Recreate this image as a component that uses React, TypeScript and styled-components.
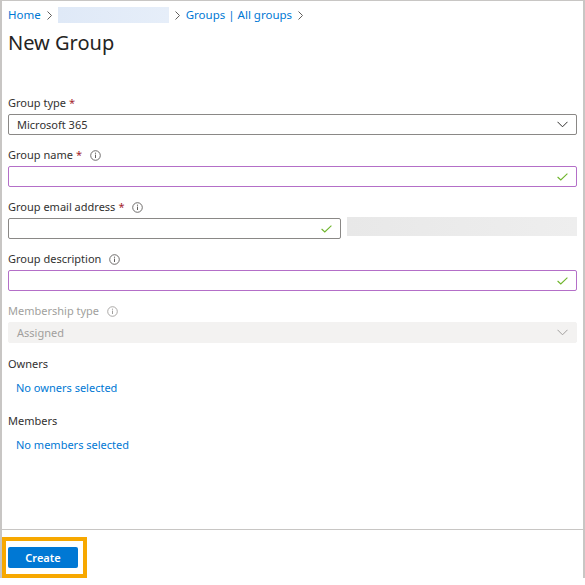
import React from 'react'
import styled, { createGlobalStyle } from 'styled-components'

const GlobalStyle = createGlobalStyle`
  html, body {
    margin: 0;
    padding: 0;
    background: #ffffff;
  }
  body {
    font-family: "Segoe UI", "Noto Sans", "Open Sans", Arial, sans-serif;
    color: #323130;
  }
  * {
    box-sizing: border-box;
  }
`

const Panel = styled.div`
  width: 585px;
  height: 578px;
  border-top: 1px solid #c8c6c4;
  border-left: 2px solid #c8c6c4;
  border-right: 2px solid #c8c6c4;
  display: flex;
  flex-direction: column;
`

const Body = styled.div`
  flex: 1;
  padding: 6px 6px 0 6px;
`

const Crumbs = styled.nav`
  display: flex;
  align-items: center;
  height: 16px;
  font-size: 11.5px;
  line-height: 16px;
`

const CrumbLink = styled.a`
  color: #0078d4;
  text-decoration: none;
`

const CrumbSep = styled.span`
  display: inline-flex;
  margin: 0 6px 0 6px;
`

const Redacted = styled.span`
  display: inline-block;
  width: 111px;
  height: 16px;
  background: linear-gradient(90deg, #dfe9f7, #e6eef9);
`

const Title = styled.h1`
  margin: 6px 0 0 0;
  font-size: 20px;
  line-height: 28px;
  font-weight: 400;
  color: #252423;
`

const Form = styled.div`
  margin-top: 38px;
  display: flex;
  flex-direction: column;
`

const Field = styled.div<{ $gap?: number }>`
  display: flex;
  flex-direction: column;
  margin-bottom: ${p => p.$gap ?? 12}px;
`

const Label = styled.div<{ $disabled?: boolean }>`
  display: flex;
  align-items: center;
  height: 16px;
  margin-bottom: 3px;
  font-size: 11px;
  line-height: 16px;
  color: ${p => (p.$disabled ? '#a19f9d' : '#323130')};
`

const Required = styled.span`
  color: #a4262c;
  margin-left: 3px;
`

const InfoWrap = styled.span`
  display: inline-flex;
  margin-left: 8px;
`

const Control = styled.div<{ $tone?: 'plain' | 'purple' | 'disabled' }>`
  height: 21px;
  display: flex;
  align-items: center;
  justify-content: space-between;
  padding: 0 8px 0 8px;
  font-size: 11px;
  border-radius: 2px;
  border: 1px solid
    ${p => (p.$tone === 'purple' ? '#b46fc8' : p.$tone === 'disabled' ? '#f3f2f1' : '#8a8886')};
  background: ${p => (p.$tone === 'disabled' ? '#f3f2f1' : '#ffffff')};
  color: ${p => (p.$tone === 'disabled' ? '#a19f9d' : '#323130')};
`

const Row = styled.div`
  display: flex;
  align-items: flex-start;
  gap: 6px;
`

const EmailBox = styled(Control)`
  flex: 0 0 333px;
`

const Masked = styled.div`
  flex: 1;
  height: 19px;
  margin-top: -1px;
  background: linear-gradient(90deg, #e8e8e8, #eeeeee);
`

const Section = styled.div<{ $gap?: number }>`
  display: flex;
  flex-direction: column;
  margin-bottom: ${p => p.$gap ?? 0}px;
`

const SectionLabel = styled.div`
  font-size: 11px;
  line-height: 16px;
  color: #323130;
  margin-bottom: 8px;
`

const Picker = styled.a`
  padding-left: 8px;
  font-size: 11px;
  line-height: 16px;
  color: #0078d4;
  text-decoration: none;
`

const Footer = styled.div`
  border-top: 1px solid #c8c6c4;
  padding: 7px 0 0 0;
`

const Highlight = styled.div`
  display: inline-flex;
  border: 4px solid #f7a800;
  padding: 6px 5px 6px 2px;
`

const PrimaryButton = styled.button`
  width: 70px;
  height: 21px;
  border: none;
  border-radius: 2px;
  background: #0078d4;
  color: #ffffff;
  font-family: inherit;
  font-size: 11px;
  font-weight: 600;
  padding: 0;
`

const Chevron = ({ color = '#323130' }: { color?: string }) => (
  <svg width="11" height="7" viewBox="0 0 11 7">
    <polyline points="0.5,0.8 5.5,5.8 10.5,0.8" fill="none" stroke={color} strokeWidth="1" />
  </svg>
)

const Check = () => (
  <svg width="11" height="8" viewBox="0 0 11 8">
    <polyline points="0.6,4 3.8,7 10.4,0.6" fill="none" stroke="#6fb52c" strokeWidth="1.1" />
  </svg>
)

const Sep = () => (
  <CrumbSep>
    <svg width="5" height="9" viewBox="0 0 5 9">
      <polyline points="0.5,0.5 4.5,4.5 0.5,8.5" fill="none" stroke="#605e5c" strokeWidth="1" />
    </svg>
  </CrumbSep>
)

const Info = ({ color = '#605e5c' }: { color?: string }) => (
  <InfoWrap>
    <svg width="11" height="11" viewBox="0 0 11 11">
      <circle cx="5.5" cy="5.5" r="4.8" fill="none" stroke={color} strokeWidth="0.9" />
      <line x1="5.5" y1="4.6" x2="5.5" y2="8" stroke={color} strokeWidth="1" />
      <circle cx="5.5" cy="3.2" r="0.6" fill={color} />
    </svg>
  </InfoWrap>
)

export default function App() {
  return (
    <>
      <GlobalStyle />
      <Panel>
        <Body>
          <Crumbs>
            <CrumbLink>Home</CrumbLink>
            <Sep />
            <Redacted />
            <Sep />
            <CrumbLink>Groups | All groups</CrumbLink>
            <Sep />
          </Crumbs>
          <Title>New Group</Title>

          <Form>
            <Field>
              <Label>
                Group type<Required>*</Required>
              </Label>
              <Control>
                <span>Microsoft 365</span>
                <Chevron />
              </Control>
            </Field>

            <Field>
              <Label>
                Group name<Required>*</Required>
                <Info />
              </Label>
              <Control $tone="purple">
                <span />
                <Check />
              </Control>
            </Field>

            <Field>
              <Label>
                Group email address<Required>*</Required>
                <Info />
              </Label>
              <Row>
                <EmailBox>
                  <span />
                  <Check />
                </EmailBox>
                <Masked />
              </Row>
            </Field>

            <Field>
              <Label>
                Group description
                <Info />
              </Label>
              <Control $tone="purple">
                <span />
                <Check />
              </Control>
            </Field>

            <Field $gap={13}>
              <Label $disabled>
                Membership type
                <Info color="#a19f9d" />
              </Label>
              <Control $tone="disabled">
                <span>Assigned</span>
                <Chevron color="#a19f9d" />
              </Control>
            </Field>

            <Section $gap={17}>
              <SectionLabel>Owners</SectionLabel>
              <Picker>No owners selected</Picker>
            </Section>

            <Section>
              <SectionLabel>Members</SectionLabel>
              <Picker>No members selected</Picker>
            </Section>
          </Form>
        </Body>
        <Footer>
          <Highlight>
            <PrimaryButton>Create</PrimaryButton>
          </Highlight>
        </Footer>
      </Panel>
    </>
  )
}
